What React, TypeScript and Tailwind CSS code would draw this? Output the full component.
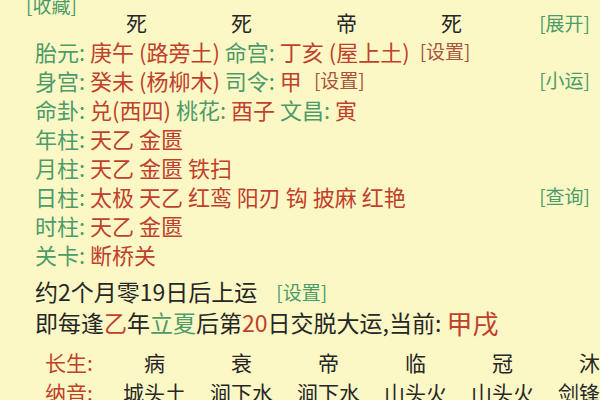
import React from "react";

const G = "text-[#4c9b69]";
const R = "text-[#c0402c]";
const row = "flex items-center h-[29px] pl-[35px] pr-[10px] text-[22px] leading-none";

function L({ t }: { t: string }) {
  return <span className="text-[#4c9b69]">{t}:&nbsp;</span>;
}

export default function App() {
  const top = ["死", "死", "帝", "死"];
  const cs = ["病", "衰", "帝", "临", "冠", "沐"];
  const ny = ["城头土", "涧下水", "涧下水", "山头火", "山头火", "剑锋金"];
  return (
    <div className="w-[600px] h-[400px] overflow-hidden bg-[#fcf8c6] text-[#262626] whitespace-nowrap font-['Noto_Sans_CJK_SC','Noto_Sans',sans-serif]">
      <div className="h-[18px] mt-[-5px] flex items-center pl-[26px] text-[19px] leading-none">
        <span className={G}>[收藏]</span>
      </div>
      <div className="h-[18px] flex items-center pl-[84px] pr-[10px] text-[21px] leading-none">
        <div className="grid shrink-0 grid-cols-[105px_105px_105px_105px] text-center">
          {top.map((t, i) => (
            <span key={i}>{t}</span>
          ))}
        </div>
        <span className={`ml-auto text-[19px] ${G}`}>[展开]</span>
      </div>
      <div className={`${row} mt-[5px]`}>
        <L t="胎元" />
        <span className={R}>庚午 (路旁土)&nbsp;</span>
        <L t="命宫" />
        <span className={R}>丁亥 (屋上土)</span>
        <span className="ml-[10px] text-[19px] text-[#a8533c]">[设置]</span>
      </div>
      <div className={row}>
        <L t="身宫" />
        <span className={R}>癸未 (杨柳木)&nbsp;</span>
        <L t="司令" />
        <span className={R}>甲</span>
        <span className="ml-[12px] text-[19px] text-[#a8533c]">[设置]</span>
        <span className={`ml-auto text-[19px] ${G}`}>[小运]</span>
      </div>
      <div className={row}>
        <L t="命卦" />
        <span className={R}>兑(西四)&nbsp;</span>
        <L t="桃花" />
        <span className={R}>酉子&nbsp;</span>
        <L t="文昌" />
        <span className={R}>寅</span>
      </div>
      <div className={row}>
        <L t="年柱" />
        <span className={R}>天乙 金匮</span>
      </div>
      <div className={row}>
        <L t="月柱" />
        <span className={R}>天乙 金匮 铁扫</span>
      </div>
      <div className={row}>
        <L t="日柱" />
        <span className={R}>太极 天乙 红鸾 阳刃 钩 披麻 红艳</span>
        <span className={`ml-auto text-[19px] ${G}`}>[查询]</span>
      </div>
      <div className={row}>
        <L t="时柱" />
        <span className={R}>天乙 金匮</span>
      </div>
      <div className={row}>
        <L t="关卡" />
        <span className={R}>断桥关</span>
      </div>
      <div className="flex items-center h-[29px] pl-[35px] mt-[9px] text-[23px] leading-none">
        <span>约2个月零19日后上运</span>
        <span className={`ml-[19px] text-[19px] ${G}`}>[设置]</span>
      </div>
      <div className="flex items-center h-[29px] pl-[35px] mt-[2px] text-[23px] leading-none">
        <span>即每逢</span>
        <span className={R}>乙</span>
        <span>年</span>
        <span className={G}>立夏</span>
        <span>后第</span>
        <span className={R}>20</span>
        <span>日交脱大运,当前:&nbsp;</span>
        <span className={`text-[26px] ${R}`}>甲戌</span>
      </div>
      <div className="flex items-center h-[29px] pl-[45px] mt-[11px] text-[21px] leading-none">
        <span className={`w-[66px] shrink-0 ${R}`}>长生:</span>
        <div className="grid shrink-0 grid-cols-[87px_87px_87px_87px_87px_87px] text-center">
          {cs.map((t, i) => (
            <span key={i}>{t}</span>
          ))}
        </div>
      </div>
      <div className="flex items-center h-[29px] pl-[45px] mt-[1px] text-[21px] leading-none">
        <span className={`w-[66px] shrink-0 ${R}`}>纳音:</span>
        <div className="grid shrink-0 grid-cols-[87px_87px_87px_87px_87px_87px] text-center">
          {ny.map((t, i) => (
            <span key={i}>{t}</span>
          ))}
        </div>
      </div>
    </div>
  );
}
